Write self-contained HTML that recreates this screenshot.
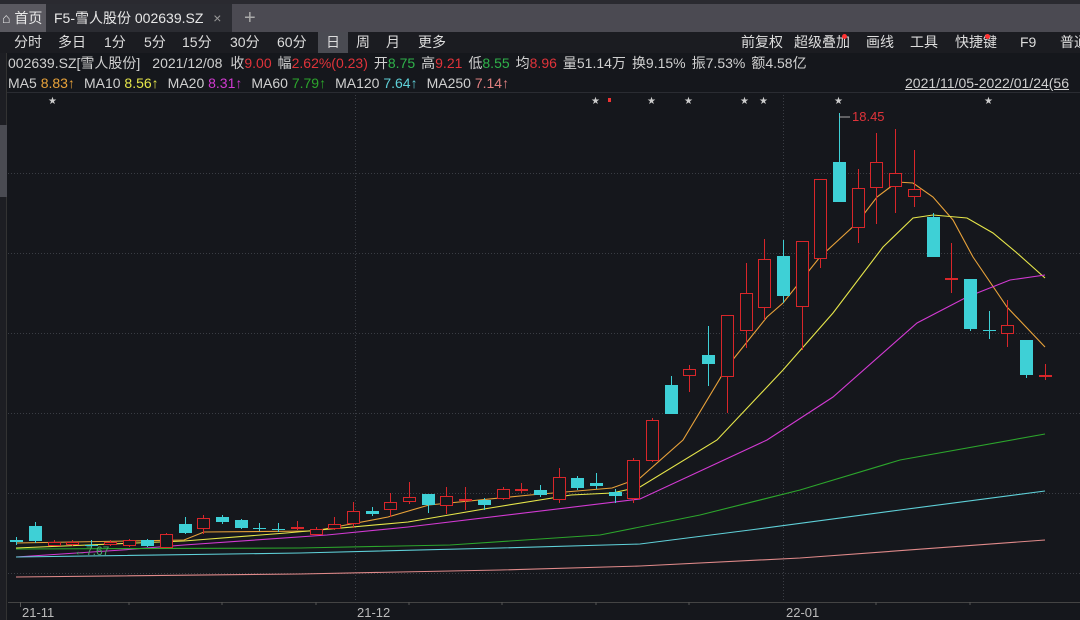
<!DOCTYPE html>
<html><head><meta charset="utf-8"><style>
*{margin:0;padding:0;box-sizing:border-box}
body{width:1080px;height:620px;overflow:hidden;background:#15171c;font-family:"Liberation Sans","Noto Sans CJK SC",sans-serif;color:#d0d0d0;position:relative}
.tabbar{position:absolute;left:0;top:0;width:1080px;height:32px;background:#4b4a52;border-top:4px solid #2a2a30}
.tab{position:absolute;top:0;height:28px;line-height:28px;font-size:14px;color:#e8e8e8;white-space:nowrap}
.tb{position:absolute;top:32px;left:0;width:1080px;height:21px;background:#1b1c21;font-size:14px;line-height:21px;overflow:hidden}
.tb span{position:absolute;top:0;color:#ddd;white-space:nowrap}
.r{position:absolute;font-size:14px;line-height:19px;white-space:nowrap}
.r b{font-weight:normal;margin-right:9px}
.r.i b{margin-right:6px}
.red{color:#e0333a}.grn{color:#2fb14a}
</style></head><body>
<div class="tabbar">
 <div class="tab" style="left:0;width:46px;background:#5a5960;padding-left:2px">⌂ 首页</div>
 <div class="tab" style="left:46px;width:186px;background:#2b2c32;padding-left:8px">F5-雪人股份 002639.SZ <span style="color:#999;margin-left:6px">×</span></div>
 <div class="tab" style="left:244px;font-size:20px;color:#aaa">+</div>
</div>
<div class="tb">
 <span style="left:14px">分时</span><span style="left:58px">多日</span><span style="left:104px">1分</span><span style="left:144px">5分</span><span style="left:182px">15分</span><span style="left:230px">30分</span><span style="left:277px">60分</span>
 <span style="left:318px;width:30px;height:21px;background:#4a4b52;text-align:center">日</span>
 <span style="left:356px">周</span><span style="left:386px">月</span><span style="left:418px">更多</span>
 <span style="left:741px">前复权</span><span style="left:794px">超级叠加</span><span style="left:866px">画线</span><span style="left:910px">工具</span><span style="left:955px">快捷键</span><span style="left:1020px">F9</span><span style="left:1060px">普通</span>
 <i style="position:absolute;left:842px;top:2px;width:5px;height:5px;border-radius:50%;background:#f33"></i>
 <i style="position:absolute;left:985px;top:2px;width:5px;height:5px;border-radius:50%;background:#f33"></i>
</div>
<div class="r i" style="left:8px;top:54px"><b style="margin-right:12px">002639.SZ[雪人股份]</b><b style="margin-right:8px">2021/12/08</b><b>收<span class="red">9.00</span></b><b>幅<span class="red">2.62%(0.23)</span></b><b>开<span class="grn">8.75</span></b><b>高<span class="red">9.21</span></b><b>低<span class="grn">8.55</span></b><b>均<span class="red">8.96</span></b><b>量51.14万</b><b>换9.15%</b><b>振7.53%</b><b>额4.58亿</b></div>
<div class="r" style="left:8px;top:74px"><b>MA5 <span style="color:#e8a23a">8.83↑</span></b><b>MA10 <span style="color:#e6e64a">8.56↑</span></b><b>MA20 <span style="color:#d23ad2">8.31↑</span></b><b>MA60 <span style="color:#2ca52c">7.79↑</span></b><b>MA120 <span style="color:#5fd0d8">7.64↑</span></b><b>MA250 <span style="color:#e08080">7.14↑</span></b></div>
<div class="r" style="left:905px;top:74px;text-decoration:underline">2021/11/05-2022/01/24(56</div>
<div style="position:absolute;left:0;top:92px;width:1080px;height:1px;background:#2a2c32"></div>
<div style="position:absolute;left:0;top:53px;width:7px;height:567px;background:#1d1e23;border-right:1px solid #333"></div>
<div style="position:absolute;left:0;top:125px;width:7px;height:72px;background:#4a4b52"></div>
<svg width="1080" height="620" style="position:absolute;left:0;top:0" xmlns="http://www.w3.org/2000/svg">
<g stroke="#3a3d44" stroke-dasharray="1,2" stroke-width="1">
<line x1="8" y1="173.5" x2="1080" y2="173.5"/><line x1="8" y1="253.5" x2="1080" y2="253.5"/><line x1="8" y1="333.5" x2="1080" y2="333.5"/><line x1="8" y1="413.5" x2="1080" y2="413.5"/><line x1="8" y1="493.5" x2="1080" y2="493.5"/><line x1="8" y1="573.5" x2="1080" y2="573.5"/>
<line x1="355.5" y1="95" x2="355.5" y2="602"/><line x1="783.5" y1="95" x2="783.5" y2="602"/>
</g>
<line x1="8" y1="602.5" x2="1080" y2="602.5" stroke="#444"/>
<g stroke="#555"><line x1="20.5" y1="602" x2="20.5" y2="607"/><line x1="129" y1="602" x2="129" y2="605"/><line x1="222" y1="602" x2="222" y2="605"/><line x1="316" y1="602" x2="316" y2="605"/><line x1="409" y1="602" x2="409" y2="605"/><line x1="502" y1="602" x2="502" y2="605"/><line x1="596" y1="602" x2="596" y2="605"/><line x1="689" y1="602" x2="689" y2="605"/><line x1="876" y1="602" x2="876" y2="605"/><line x1="970" y1="602" x2="970" y2="605"/></g>
<g font-family="Liberation Sans" font-size="13" fill="#bbb"><text x="22" y="617">21-11</text><text x="357" y="617">21-12</text><text x="786" y="617">22-01</text></g>
<g font-size="10" fill="#ccc" font-family="DejaVu Sans"><text x="48" y="104">★</text><text x="591" y="104">★</text><text x="647" y="104">★</text><text x="684" y="104">★</text><text x="740" y="104">★</text><text x="759" y="104">★</text><text x="834" y="104">★</text><text x="984" y="104">★</text></g>
<rect x="608" y="98" width="3" height="4" fill="#e33"/>
<g fill="none" stroke-width="1.1">
<polyline stroke="#e8a23a" points="16,543 184,540 204,532 314,531 388,517 429,505 530,495 612,488 640,478 683,440 727,367 767,317 783,303 820,257 857,223 877,197 897,182 913,183 933,197 953,220 973,257 1007,307 1045,347"/>
<polyline stroke="#e6e64a" points="16,548 184,541 286,533 408,522 490,508 571,495 612,493 640,487 717,440 783,370 833,313 883,247 913,218 933,215 967,218 993,233 1017,253 1045,278"/>
<polyline stroke="#d23ad2" points="16,557 122,550 184,545 327,535 408,527 640,499 767,440 833,397 917,323 967,297 1010,280 1045,275"/>
<polyline stroke="#2ca52c" points="16,549 300,548 450,545 600,535 700,515 800,490 900,460 1045,434"/>
<polyline stroke="#5fd0d8" points="16,557 300,553 500,548 640,544 750,530 900,510 1045,491"/>
<polyline stroke="#e08a8a" points="16,577 300,574 500,570 640,566 800,558 1045,540"/>
</g>
<g id="c" shape-rendering="crispEdges"></g>
<text x="74" y="555" font-size="12" fill="#4aa86a">←7.67</text>
<line x1="839" y1="117" x2="850" y2="117" stroke="#aaa"/><text x="852" y="121" font-size="13" fill="#e0333a">18.45</text>
</svg>
<script>
var d=[
[540,542,537,545,0],[526,541,522,543,0],[542,545,540,546,1],[542,544,540,546,1],[545,546,540,548,0],[542,544,540,546,1],[540,545,539,547,1],[540,546,539,547,0],[534,547,533,548,1],[524,533,517,534,0],[518,528,515,534,1],[517,522,515,524,0],[520,528,519,529,0],[528,529,523,531,0],[529,530,523,532,0],[527,528,521,530,1],[529,534,527,535,1],[524,528,517,530,1],[511,523,502,528,1],[511,514,507,516,0],[502,509,493,517,1],[497,501,482,504,1],[494,505,494,513,0],[496,505,487,514,1],[499,500,487,510,1],[500,505,498,510,0],[489,498,487,500,1],[489,490,483,493,1],[490,495,485,497,0],[477,499,468,503,1],[478,488,476,490,0],[483,486,473,489,0],[492,496,489,503,0],[460,498,458,503,1],
[420,460,418,462,1],[385,414,376,414,0],[369,375,365,392,1],[355,364,326,386,0],[315,376,315,413,1],[293,330,263,348,1],[259,307,239,320,1],[256,296,240,303,0],[241,306,241,350,1],[179,258,179,268,1],[162,202,113,202,0],[188,227,169,243,1],[162,187,133,224,1],[173,186,129,213,1],[189,196,150,207,1],[217,257,213,257,0],[278,279,243,293,1],[279,329,279,331,0],[330,331,311,339,0],[325,333,300,347,1],[340,375,340,378,0],[375,376,364,380,1]];
var g=document.getElementById('c'),s='';
d.forEach(function(c,i){var x=Math.round(16.3+18.7*i),w=6;
var col=c[4]?'#d8262a':'#3ed0d6';
s+='<rect x="'+x+'" y="'+c[2]+'" width="1" height="'+(c[3]-c[2])+'" fill="'+col+'"/>';
var h=Math.max(c[1]-c[0],1);
if(c[4])s+='<rect x="'+(x-w)+'" y="'+c[0]+'" width="'+(2*w+1)+'" height="'+(h+1)+'" fill="'+col+'"/><rect x="'+(x-w+1)+'" y="'+(c[0]+1)+'" width="'+(2*w-1)+'" height="'+Math.max(h-1,0)+'" fill="#15171c"/>';
else s+='<rect x="'+(x-w)+'" y="'+c[0]+'" width="'+(2*w+1)+'" height="'+h+'" fill="'+col+'"/>';});
g.innerHTML=s;
</script>
</body></html>
